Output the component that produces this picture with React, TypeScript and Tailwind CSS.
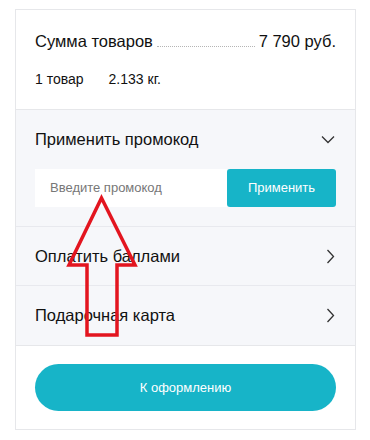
import React from "react";

function ChevronDown() {
  return (
    <svg width="14" height="9" viewBox="0 0 14 9" fill="none">
      <path d="M1 1.5L7 7.5L13 1.5" stroke="#333" strokeWidth="1.3" />
    </svg>
  );
}

function ChevronRight() {
  return (
    <svg width="9" height="15" viewBox="0 0 9 15" fill="none">
      <path d="M1.5 1L7.5 7.5L1.5 14" stroke="#333" strokeWidth="1.3" />
    </svg>
  );
}

export default function App() {
  return (
    <div
      className="relative w-[370px] h-[440px] bg-white overflow-hidden"
      style={{ fontFamily: '"Liberation Sans", Arial, sans-serif' }}
    >
      <div className="ml-[15px] mt-[9px] w-[341px] border border-[#e6e7ea] border-b-0">
        {/* summary */}
        <div className="h-[100px] border-b border-[#e6e7ea] px-[19px] pt-[22px]">
          <div className="flex items-end text-[16.5px] leading-[18px] text-[#111]">
            <span>Сумма товаров</span>
            <span className="flex-1 mx-[4px] mb-[3px] border-b border-dotted border-[#b5b5b5]" />
            <span>7 790 руб.</span>
          </div>
          <div className="mt-[21px] flex text-[14px] leading-[16px] text-[#111]">
            <span>1 товар</span>
            <span className="ml-[25px]">2.133 кг.</span>
          </div>
        </div>
        {/* grey section */}
        <div className="bg-[#f6f7fa]">
          <div className="border-b border-[#e8e9ee] px-[19px] pt-[19px] pb-[19px]">
            <div className="flex items-center justify-between h-[20px]">
              <span className="text-[16.5px] text-[#111]">Применить промокод</span>
              <span className="mr-[1px]">
                <ChevronDown />
              </span>
            </div>
            <div className="mt-[20px] flex h-[38px]">
              <div className="flex-1 bg-white flex items-center pl-[15px] text-[13px] text-[#777]">
                Введите промокод
              </div>
              <button className="w-[109px] rounded-[3px] bg-[#17b4c8] text-white text-[13px] font-medium">
                Применить
              </button>
            </div>
          </div>
          <div className="h-[59px] border-b border-[#e8e9ee] px-[19px] flex items-center justify-between">
            <span className="text-[16.5px] text-[#111]">Оплатить баллами</span>
            <span className="mr-[1px]">
              <ChevronRight />
            </span>
          </div>
          <div className="h-[60px] border-b border-[#e6e7ea] px-[19px] flex items-center justify-between">
            <span className="text-[16.5px] text-[#111]">Подарочная карта</span>
            <span className="mr-[1px]">
              <ChevronRight />
            </span>
          </div>
        </div>
        <div className="h-[84px] border-b border-[#e6e7ea] px-[19px] pt-[18px]">
          <button className="w-full h-[47px] rounded-full bg-[#17b4c8] text-white text-[13px] font-medium">
            К оформлению
          </button>
        </div>
      </div>
      {/* annotation arrow */}
      <svg className="absolute left-0 top-0 pointer-events-none" width="370" height="440">
        <polygon
          points="101.5,198 135,265 117,265 117,335 87,335 87,265 69,265"
          fill="none"
          stroke="#e3151f"
          strokeWidth="3.5"
          strokeLinejoin="miter"
        />
      </svg>
    </div>
  );
}
